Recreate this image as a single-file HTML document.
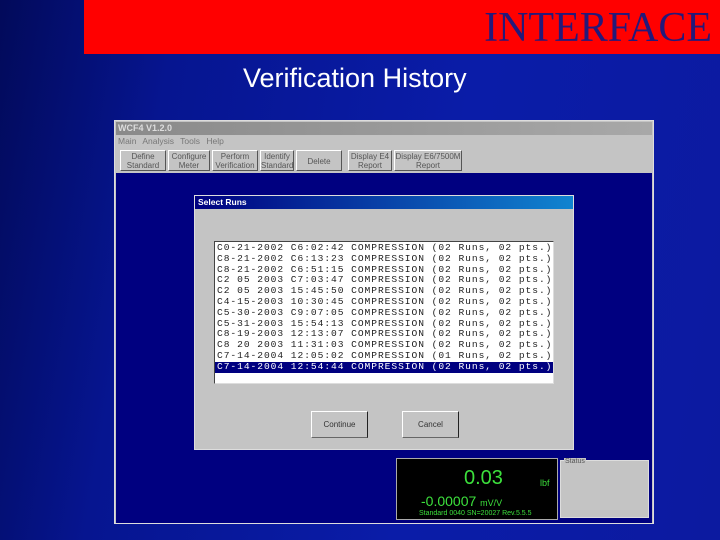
<!DOCTYPE html>
<html><head><style>
*{margin:0;padding:0;box-sizing:border-box}
body{width:720px;height:540px;overflow:hidden;position:relative;background:linear-gradient(100deg,#020a5a 0%,#061590 22%,#0a1ca8 60%,#0c1aa0 100%);font-family:"Liberation Sans",sans-serif}
.a{position:absolute}
.btn{position:absolute;top:150px;height:21px;background:#c4c4c4;border:1px solid;border-color:#fff #555 #555 #fff;font-size:8px;color:#555;text-align:center;line-height:9px;padding-top:1px}
.row{height:10.8px;line-height:10.8px;font-family:"Liberation Mono",monospace;font-size:9.6px;color:#222;padding-left:2px;white-space:pre;letter-spacing:0.95px}
</style></head><body>
<div class="a" style="left:84px;top:0;width:636px;height:54px;background:#ff0000"></div>
<div class="a" style="right:8px;top:4px;font-family:'Liberation Serif',serif;font-size:42px;color:#24197a;line-height:48px">INTERFACE</div>
<div class="a" style="left:243px;top:62px;font-size:27px;color:#fff;line-height:32px">Verification History</div>
<!-- app window -->
<div class="a" style="left:114px;top:120px;width:540px;height:404px;background:#c4c4c4;border:1px solid #ddd"></div>
<div class="a" style="left:116px;top:122px;width:536px;height:13px;background:linear-gradient(90deg,#8a8a8a,#a8a8a8);color:#ddd;font-size:9px;font-weight:bold;line-height:13px;padding-left:2px">WCF4 V1.2.0</div>
<div class="a" style="left:118px;top:136px;font-size:8.5px;color:#777;line-height:11px;word-spacing:4px">Main Analysis Tools Help</div>
<div class="btn" style="left:120px;width:46px">Define<br>Standard</div>
<div class="btn" style="left:168px;width:42px">Configure<br>Meter</div>
<div class="btn" style="left:212px;width:46px">Perform<br>Verification</div>
<div class="btn" style="left:260px;width:34px">Identify<br>Standard</div>
<div class="btn" style="left:296px;width:46px;line-height:19px">Delete Runs</div>
<div class="btn" style="left:348px;width:44px">Display E4<br>Report</div>
<div class="btn" style="left:394px;width:68px">Display E6/7500M<br>Report</div>
<div class="a" style="left:116px;top:173px;width:536px;height:350px;background:#000080"></div>
<!-- dialog -->
<div class="a" style="left:194px;top:195px;width:380px;height:255px;background:#c4c4c4;border:1px solid #ddd"></div>
<div class="a" style="left:195px;top:196px;width:378px;height:13px;background:linear-gradient(90deg,#000080,#1084d0);color:#fff;font-size:8.5px;font-weight:bold;line-height:13px;padding-left:3px">Select Runs</div>
<div class="a" style="left:214px;top:241px;width:340px;height:143px;background:#fff;border:1px solid;border-color:#444 #ddd #ddd #444;padding-top:1px;overflow:hidden">
<div class="row">C0-21-2002 C6:02:42 COMPRESSION (02 Runs, 02 pts.)</div>
<div class="row">C8-21-2002 C6:13:23 COMPRESSION (02 Runs, 02 pts.)</div>
<div class="row">C8-21-2002 C6:51:15 COMPRESSION (02 Runs, 02 pts.)</div>
<div class="row">C2 05 2003 C7:03:47 COMPRESSION (02 Runs, 02 pts.)</div>
<div class="row">C2 05 2003 15:45:50 COMPRESSION (02 Runs, 02 pts.)</div>
<div class="row">C4-15-2003 10:30:45 COMPRESSION (02 Runs, 02 pts.)</div>
<div class="row">C5-30-2003 C9:07:05 COMPRESSION (02 Runs, 02 pts.)</div>
<div class="row">C5-31-2003 15:54:13 COMPRESSION (02 Runs, 02 pts.)</div>
<div class="row">C8-19-2003 12:13:07 COMPRESSION (02 Runs, 02 pts.)</div>
<div class="row">C8 20 2003 11:31:03 COMPRESSION (02 Runs, 02 pts.)</div>
<div class="row">C7-14-2004 12:05:02 COMPRESSION (01 Runs, 02 pts.)</div>
<div class="row" style="background:#000080;color:#fff">C7-14-2004 12:54:44 COMPRESSION (02 Runs, 02 pts.)</div>
</div>
<div class="a" style="left:311px;top:411px;width:57px;height:27px;border:1px solid;border-color:#fff #222 #666 #fff;font-size:8px;color:#333;text-align:center;line-height:25px">Continue</div>
<div class="a" style="left:402px;top:411px;width:57px;height:27px;border:1px solid;border-color:#fff #222 #666 #fff;font-size:8px;color:#333;text-align:center;line-height:25px">Cancel</div>
<!-- bottom panels -->
<div class="a" style="left:396px;top:458px;width:162px;height:62px;background:#000;border:1px solid #aaa"></div>
<div class="a" style="left:464px;top:466px;font-size:20px;color:#3ce03c;line-height:24px">0.03</div>
<div class="a" style="left:540px;top:478px;font-size:9px;color:#3ce03c">lbf</div>
<div class="a" style="left:421px;top:493px;font-size:14px;color:#3ce03c;line-height:16px">-0.00007 <span style="font-size:9px">mV/V</span></div>
<div class="a" style="left:419px;top:510px;font-size:7px;color:#3ce03c">Standard 0040 SN=20027 Rev.5.5.5</div>
<div class="a" style="left:560px;top:460px;width:89px;height:58px;background:#c4c4c4;border:1px solid #ddd"></div>
<div class="a" style="left:564px;top:458px;font-size:7px;color:#555;background:#c4c4c4;padding:0 1px">Status</div>
</body></html>
